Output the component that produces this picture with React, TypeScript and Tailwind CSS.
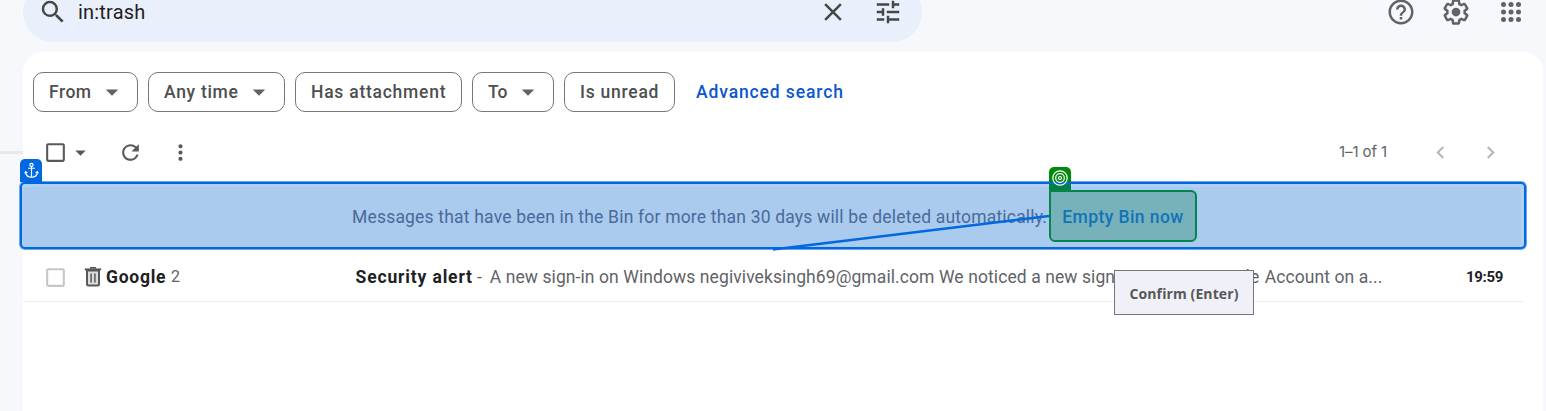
import type { ReactNode } from "react";
import {
  MdSearch,
  MdClose,
  MdTune,
  MdHelpOutline,
  MdArrowDropDown,
  MdCheckBoxOutlineBlank,
  MdRefresh,
  MdMoreVert,
  MdChevronLeft,
  MdChevronRight,
} from "react-icons/md";

function GearIcon() {
  return (
    <svg viewBox="0 0 24 24" className="size-[30px]" fill="currentColor">
      <path d="M13.85 22.25h-3.7c-.74 0-1.36-.54-1.45-1.27l-.27-1.89c-.27-.14-.53-.29-.79-.46l-1.8.72c-.7.26-1.47-.03-1.81-.65L2.2 15.53c-.35-.66-.2-1.44.36-1.88l1.53-1.19c-.01-.15-.02-.3-.02-.46 0-.15.01-.31.02-.46l-1.52-1.19c-.59-.45-.74-1.26-.37-1.88l1.85-3.19c.34-.62 1.11-.9 1.79-.63l1.81.73c.26-.17.52-.32.78-.46l.27-1.91c.09-.7.71-1.25 1.44-1.25h3.7c.74 0 1.36.54 1.45 1.27l.27 1.89c.27.14.53.29.79.46l1.8-.72c.71-.26 1.48.03 1.82.65l1.84 3.18c.36.66.2 1.44-.36 1.88l-1.52 1.19c.01.15.02.3.02.46s-.01.31-.02.46l1.52 1.19c.56.45.72 1.23.37 1.86l-1.86 3.22c-.34.62-1.11.9-1.8.63l-1.8-.72c-.26.17-.52.32-.78.46l-.27 1.91c-.1.68-.72 1.22-1.46 1.22zm-3.23-2h2.76l.37-2.55.53-.22c.44-.18.88-.44 1.34-.78l.45-.34 2.38.96 1.38-2.4-2.03-1.58.07-.56c.03-.26.06-.51.06-.78s-.03-.53-.06-.78l-.07-.56 2.03-1.58-1.39-2.4-2.39.96-.45-.35c-.42-.32-.87-.58-1.33-.77l-.52-.22-.37-2.55h-2.76l-.37 2.55-.53.21c-.44.19-.88.44-1.34.79l-.45.33-2.38-.95-1.39 2.39 2.03 1.58-.07.56a7 7 0 0 0-.06.79c0 .26.02.53.06.78l.07.56-2.03 1.58 1.38 2.4 2.39-.96.45.35c.43.33.86.58 1.33.77l.53.22.38 2.55z" />
      <circle cx="12" cy="12" r="3.5" />
    </svg>
  );
}

function AppsIcon() {
  const stops = [6, 12, 18];
  return (
    <svg viewBox="0 0 24 24" className="size-[30px]" fill="currentColor">
      {stops.map((y) => stops.map((x) => <circle key={`${x}-${y}`} cx={x} cy={y} r="2" />))}
    </svg>
  );
}

function TrashIcon() {
  return (
    <svg viewBox="0 0 18 20" className="h-5 w-[18px]" fill="none" stroke="#57595c">
      <path d="M3 3.5h12v13.8q0 1.2-1.2 1.2H4.2Q3 18.500 3 17.300z" fill="#dcdcdc" strokeWidth="2" />
      <path d="M.8 2.400h16.400" strokeWidth="2" />
      <path d="M6 .8h6" strokeWidth="1.600" />
      <path d="M7.100 6.500v9M10.900 6.500v9" strokeWidth="1.500" />
    </svg>
  );
}

function AnchorIcon() {
  return (
    <svg viewBox="0 0 16 18" className="h-[17px] w-[15px]" fill="none" stroke="white" strokeWidth="1.300">
      <circle cx="8" cy="3" r="1.700" />
      <path d="M8 4.800v11.500M4.300 6.600h7.400M1.500 10.200c.3 3.700 3 6 6.500 6s6.200-2.300 6.500-6M.9 12.200l.8-2 1.900 1.400M15.100 12.200l-.8-2-1.900 1.400" />
    </svg>
  );
}

function TargetIcon() {
  return (
    <svg viewBox="0 0 16 16" className="size-4" fill="none" stroke="white" strokeWidth="1.200">
      <circle cx="8" cy="8" r="7.200" />
      <circle cx="8" cy="8" r="4.300" />
      <circle cx="8" cy="8" r="1.500" />
    </svg>
  );
}

function Chip({ children, menu, width }: { children: ReactNode; menu?: boolean; width: string }) {
  return (
    <button
      className={`flex h-10 shrink-0 items-center rounded-[10px] border border-[#747775] pl-[15px] text-[17.5px] font-medium whitespace-nowrap text-[#4d504f] ${width}`}
    >
      {children}
      {menu && <MdArrowDropDown className="mr-[10px] ml-auto size-[30px] shrink-0 text-[#5f6368]" />}
    </button>
  );
}

export default function App() {
  return (
    <div className="relative h-[411px] w-full overflow-hidden bg-[#f6f8fc] font-['Roboto',sans-serif] text-[#202124]">
      <header className="flex h-[52px] items-start pl-[23px]">
        <div className="-mt-[18px] flex h-[60px] w-[899px] items-center rounded-full bg-[#e9f0fb] pr-[19px] pl-[15px] text-[#444746]">
          <MdSearch className="size-[30px]" />
          <span className="ml-[10px] text-[20px] tracking-[0.2px] text-[#1f1f1f]">in:trash</span>
          <MdClose className="-mt-px ml-auto size-[30px]" />
          <MdTune className="-mt-px ml-[25px] size-[30px]" />
        </div>
        <div className="-mt-[3px] mr-5 ml-auto flex gap-[25px] text-[#5f6368]">
          <MdHelpOutline className="size-[30px]" />
          <GearIcon />
          <AppsIcon />
        </div>
      </header>

      <div className="flex">
        <aside className="w-[23px] shrink-0 pt-[99px]">
          <div className="h-[3px] bg-[#e7e9ed]" />
        </aside>
        <main className="mr-[3px] h-[380px] min-w-0 grow rounded-t-[20px] bg-white pt-5">
          <div className="flex items-center gap-[10px] pl-[10px]">
            <Chip width="w-[105px]" menu>
              <span className="tracking-[0.5px]">From</span>
            </Chip>
            <Chip width="w-[137px]" menu>
              <span className="tracking-[0.7px]">Any time</span>
            </Chip>
            <Chip width="w-[167px]">
              <span className="tracking-[0.75px]">Has attachment</span>
            </Chip>
            <Chip width="w-[82px]" menu>
              <span>To</span>
            </Chip>
            <Chip width="w-[111px]">
              <span className="tracking-[0.75px]">Is unread</span>
            </Chip>
            <a className="ml-[11px] text-[17.5px] font-medium tracking-[0.88px] text-[#0b57d0]">Advanced search</a>
          </div>

          <div className="mt-3 flex h-14 items-center pl-5 text-[#57595c]">
            <MdCheckBoxOutlineBlank className="size-[25px]" />
            <MdArrowDropDown className="size-[25px]" />
            <MdRefresh className="ml-[25px] size-[25px]" />
            <MdMoreVert className="ml-[25px] size-[25px]" />
            <span className="ml-auto font-['Inter',sans-serif] text-[15px] tracking-[-0.1px] text-[#5f6368]">1–1 of 1</span>
            <MdChevronLeft className="ml-[41px] size-[25px] text-[#b4b6b8]" />
            <MdChevronRight className="mr-[40px] ml-[25px] size-[25px] text-[#b4b6b8]" />
          </div>

          <section className="relative mt-px -ml-1 h-[69px] w-[1508px] rounded-[6px] bg-[#6ea6ec] p-px">
            <div className="h-full rounded-[5px] border-2 border-[#0068e0] bg-[#b2d0f3] pt-[3px] pr-[3px] pl-px">
              <div className="flex h-full items-center rounded-[4px] bg-[#aacaee] pt-px pl-[329px] whitespace-nowrap">
                <span className="text-[17.5px] tracking-[0.19px] text-[#486b9b]">
                  Messages that have been in the Bin for more than 30 days will be deleted automatically.
                </span>
              </div>
            </div>
            <div className="absolute -top-[22px] left-px flex h-[23px] w-[22px] items-center justify-center rounded-t-[5px] bg-[#0068e0]">
              <AnchorIcon />
            </div>
            <div className="absolute -top-[14px] left-[1030px] h-[24px] w-[22px] rounded-t-[5px] bg-linear-to-b from-[#008a0c] from-[16px] to-[#048045] to-[16px]" />
            <div className="absolute top-px left-[1030px] h-[2px] w-[22px] bg-[#0068e0]" />
            <div className="absolute -top-[11px] left-[1033px]">
              <TargetIcon />
            </div>
            <button className="absolute top-[9px] left-[1030px] flex h-[52px] w-[148px] items-center justify-center rounded-[6px] rounded-tl-none border-2 border-[#04854c] bg-[#77b2ba] pt-[3px] text-[17.5px] font-medium tracking-[0.42px] whitespace-nowrap text-[#1274b7]">
              Empty Bin now
            </button>
            <svg className="absolute top-[31px] left-[751px] h-[42px] w-[280px]" viewBox="0 0 280 42">
              <path d="M3 37.500L279 4" stroke="#0068e0" strokeWidth="2.500" />
            </svg>
          </section>

          <div className="flex h-[52px] w-[1500px] items-center border-b border-[#eceeee] pt-[3px] pl-5 text-[17.5px] whitespace-nowrap">
            <MdCheckBoxOutlineBlank className="size-[25px] text-[#c4c6c8]" />
            <span className="ml-4">
              <TrashIcon />
            </span>
            <span className="ml-1 w-[65px] font-bold tracking-[0.75px]">Google</span>
            <span className="w-[184.5px] text-[16px] text-[#5f6368]">2</span>
            <span className="font-bold tracking-[0.85px]">Security alert</span>
            <span className="ml-[4px] text-[#5f6368]">-</span>
            <span className="ml-[8px] tracking-[0.09px] text-[#5f6368]">
              A new sign-in on Windows negiviveksingh69@gmail.com We noticed a new sign
              <span className="tracking-[0.47px]">-in to your Google </span>
              <span>Account on a...</span>
            </span>
            <span className="mr-5 ml-auto text-[15px] font-bold tracking-[-0.35px]">19:59</span>
          </div>
        </main>
      </div>

      <div className="absolute top-[270px] left-[1114px] flex h-[45px] w-[140px] items-center justify-center border border-[#767676] bg-[#f0f1f8] pt-px font-['Open_Sans',sans-serif] text-[14px] font-bold tracking-[0.1px] text-[#575757]">
        Confirm (Enter)
      </div>
    </div>
  );
}
